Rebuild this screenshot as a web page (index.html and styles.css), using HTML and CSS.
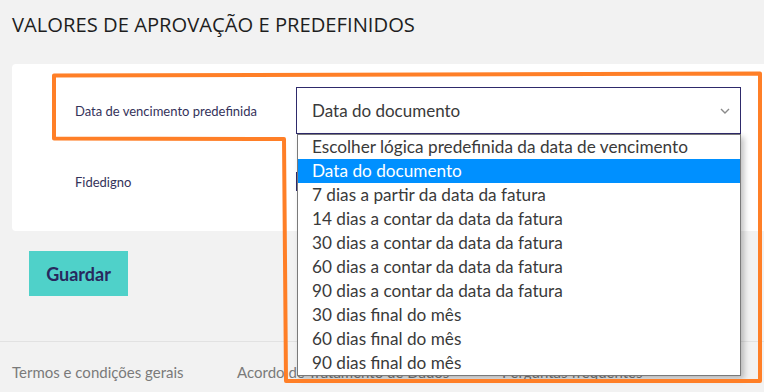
FILE: index.html
```html
<!DOCTYPE html>
<html lang="pt">
<head>
  <meta charset="UTF-8">
  <meta name="viewport" content="width=device-width, initial-scale=1.0">
  <title>Valores de aprovação e predefinidos</title>
  <link rel="stylesheet" href="styles.css">
</head>
<body>
  <h1 class="title">VALORES DE APROVAÇÃO E PREDEFINIDOS</h1>
  <div class="card">
    <div class="row first">
      <label class="label">Data de vencimento predefinida</label>
      <div class="select-wrap">
        <div class="select">
          <span>Data do documento</span>
          <svg class="chevron" width="10" height="6" viewBox="0 0 10 6"><path d="M1 1l4 4 4-4" fill="none" stroke="#8a8a8a" stroke-width="1.4"/></svg>
        </div>
        <ul class="options">
          <li>Escolher lógica predefinida da data de vencimento</li>
          <li class="active">Data do documento</li>
          <li>7 dias a partir da data da fatura</li>
          <li>14 dias a contar da data da fatura</li>
          <li>30 dias a contar da data da fatura</li>
          <li>60 dias a contar da data da fatura</li>
          <li>90 dias a contar da data da fatura</li>
          <li>30 dias final do mês</li>
          <li>60 dias final do mês</li>
          <li>90 dias final do mês</li>
        </ul>
      </div>
    </div>
    <div class="row second">
      <label class="label">Fidedigno</label>
      <div class="toggle"></div>
    </div>
  </div>
  <div class="actions">
    <button class="save">Guardar</button>
  </div>
  <div class="footer">
    <a>Termos e condições gerais</a>
    <a>Acordo de Tratamento de Dados</a>
    <a>Perguntas frequentes</a>
  </div>
  <svg class="marker" width="764" height="392" viewBox="0 0 764 392">
    <polygon points="54,75.5 760,73.5 760,381 286,381 284,139 54,138.5" fill="none" stroke="#ff7f27" stroke-width="4" stroke-linejoin="round"/>
  </svg>
</body>
</html>
```

FILE: styles.css
```css
* {
  margin: 0;
  padding: 0;
  box-sizing: border-box;
}
body {
  background-color: #f2f2f2;
  font-family: Lato, "Noto Sans", sans-serif;
  width: 764px;
  height: 392px;
  overflow: hidden;
  position: relative;
}
.title {
  font-family: "Open Sans", sans-serif;
  font-weight: 400;
  font-size: 20.2px;
  color: #1e1e1e;
  padding: 10px 12px 0;
  height: 64px;
}
.card {
  background: #fff;
  margin-left: 12px;
  height: 167px;
  border-radius: 4px 0 0 4px;
  padding: 23px 0 0 63px;
}
.row {
  display: flex;
  align-items: center;
}
.label {
  width: 221px;
  font-size: 13px;
  color: #34325a;
}
.first {
  height: 47px;
}
.second {
  margin-top: 38px;
  height: 19px;
}
.select-wrap {
  position: relative;
  width: 445px;
}
.select {
  height: 47px;
  border: 1px solid #2e2a6b;
  display: flex;
  align-items: center;
  justify-content: space-between;
  padding: 0 10px 0 15px;
  font-size: 17px;
  color: #3a3a3a;
}
.chevron {
  margin-top: 1px;
}
.options {
  position: absolute;
  top: 47px;
  left: 1px;
  right: 0;
  list-style: none;
  background: #fff;
  border: 1px solid #7a7a7a;
  box-shadow: 3px 3px 6px rgba(0, 0, 0, 0.25);
  z-index: 2;
}
.options li {
  height: 24px;
  line-height: 24px;
  padding-left: 14px;
  font-size: 17.2px;
  color: #3a3a3a;
  white-space: nowrap;
}
.options li.active {
  background: #0090ff;
  color: #fff;
}
.toggle {
  width: 40px;
  height: 19px;
  border: 1px solid #2e2a6b;
}
.actions {
  padding: 20px 0 0 29px;
  height: 110px;
}
.save {
  width: 99px;
  height: 45px;
  border: none;
  background: #4fd1c9;
  color: #28285e;
  font-family: Lato, sans-serif;
  font-weight: 700;
  font-size: 18px;
}
.footer {
  border-top: 1px solid #e2e2e2;
  display: flex;
  padding: 21px 0 0 12px;
  font-size: 15px;
  color: #7a7a7a;
}
.footer a:nth-child(1) {
  width: 225px;
}
.footer a:nth-child(2) {
  width: 265px;
}
.marker {
  position: absolute;
  left: 0;
  top: 0;
  z-index: 3;
  pointer-events: none;
}
```
